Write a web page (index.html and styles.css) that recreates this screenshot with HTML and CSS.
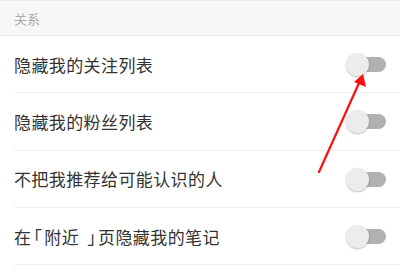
FILE: index.html
```html
<!DOCTYPE html>
<html lang="zh">
<head>
<meta charset="utf-8">
<link rel="stylesheet" href="styles.css">
</head>
<body>
<div class="page">
  <div class="section-head">关系</div>
  <ul class="list">
    <li class="row"><span class="label">隐藏我的关注列表</span><span class="switch"><span class="knob"></span></span></li>
    <li class="row"><span class="label">隐藏我的粉丝列表</span><span class="switch"><span class="knob"></span></span></li>
    <li class="row"><span class="label">不把我推荐给可能认识的人</span><span class="switch"><span class="knob"></span></span></li>
    <li class="row"><span class="label">在<span class="open">「</span>附近<span class="close">」</span>页隐藏我的笔记</span><span class="switch"><span class="knob"></span></span></li>
  </ul>
  <svg class="arrow" width="400" height="275" viewBox="0 0 400 275">
    <line x1="319" y1="172" x2="359" y2="83" stroke="#ff0d0d" stroke-width="2.2" stroke-linecap="round"/>
    <polygon points="363,74 366,87 354,82" fill="#ff0d0d"/>
  </svg>
</div>
</body>
</html>
```
FILE: styles.css
```css
* { box-sizing: border-box; }
html, body { margin: 0; padding: 0; background: #fff; }
body { font-family: "Noto Sans CJK SC", "Noto Sans", sans-serif; }
.page { position: relative; width: 400px; height: 275px; overflow: hidden; }
.section-head {
  height: 36px;
  background: #f7f7f7;
  border-top: 1px solid #ececec;
  border-bottom: 1px solid #ececec;
  color: #ababab;
  font-size: 13px;
  padding-left: 14px;
  display: flex;
  align-items: center;
}
.list { list-style: none; margin: 0; padding: 0 0 0 14px; }
.row {
  height: 57.3px;
  border-bottom: 1px solid #eeeeee;
  display: flex;
  align-items: center;
  justify-content: space-between;
  padding-right: 14px;
}
.label { font-size: 17px; color: #333; letter-spacing: 0.4px; white-space: nowrap; }
.open { font-feature-settings: "halt" 1; padding-left: 2px; padding-right: 2px; }
.close { font-feature-settings: "halt" 1; padding-left: 8px; padding-right: 2px; }
.switch {
  position: relative;
  width: 38px;
  height: 15px;
  border-radius: 8px;
  background: #b1b1b1;
  margin-top: 1px;
}
.knob {
  position: absolute;
  left: -2px;
  top: -4px;
  width: 23px;
  height: 23px;
  border-radius: 50%;
  background: #ececec;
  box-shadow: 0 1px 2px rgba(0,0,0,0.25);
}
.arrow { position: absolute; left: 0; top: 0; pointer-events: none; }
```
